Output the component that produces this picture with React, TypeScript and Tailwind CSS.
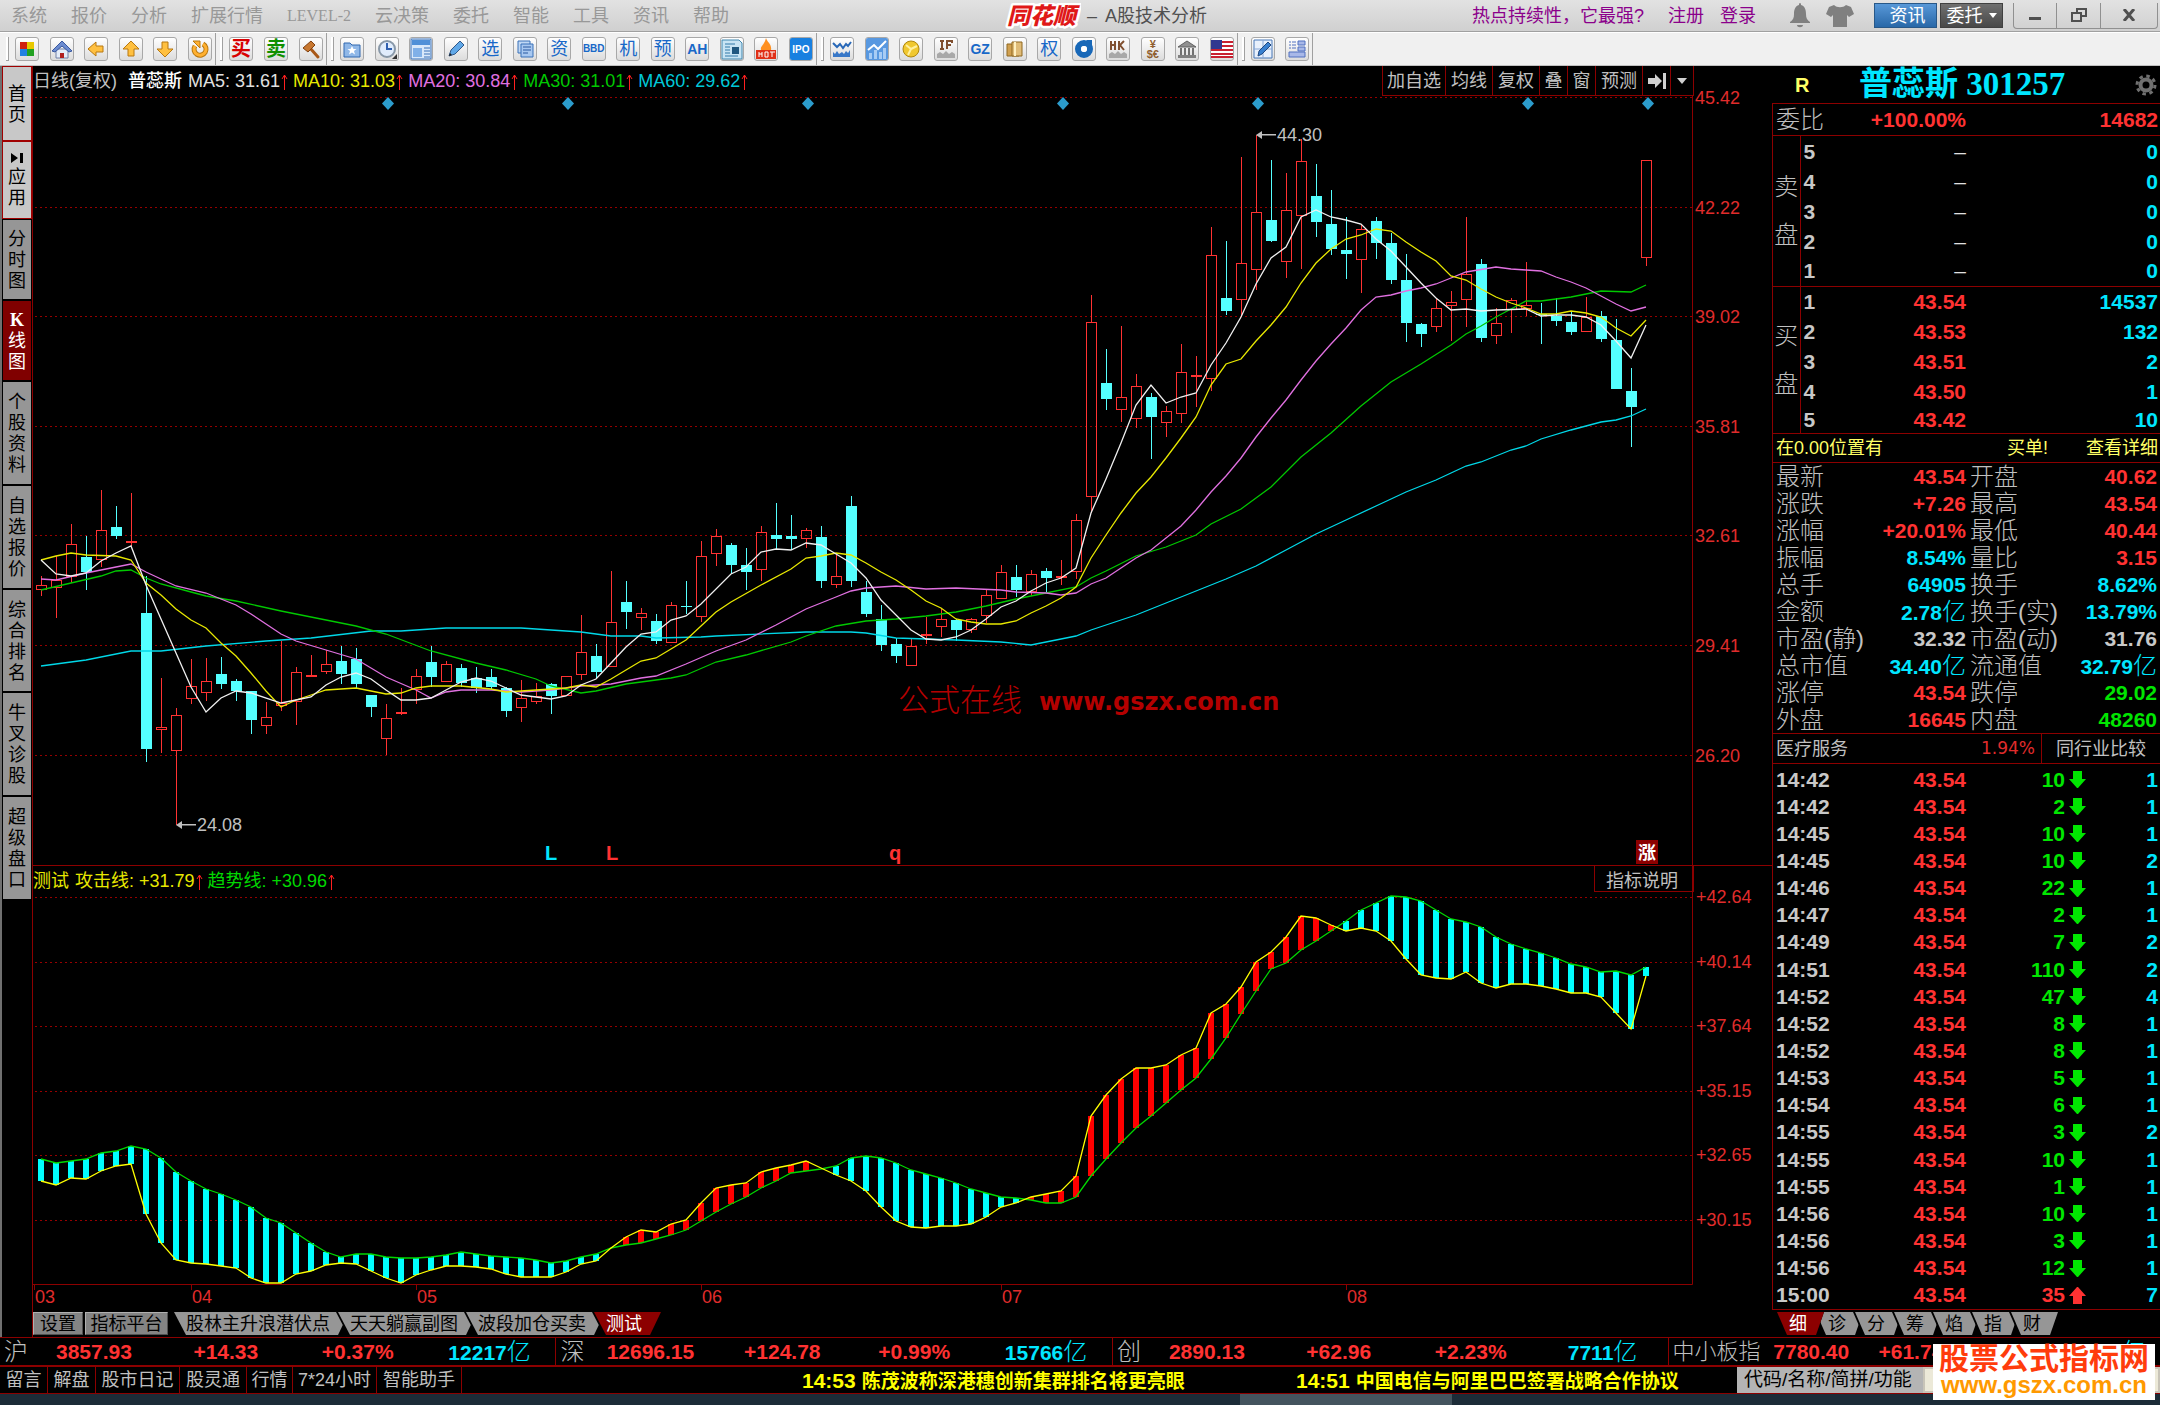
import type { ReactNode } from "react";
import clsx from "clsx";

const menus = ["系统", "报价", "分析", "扩展行情", "LEVEL-2", "云决策", "委托", "智能", "工具", "资讯", "帮助"];

const sideTabs = [
  { text: "首页", style: "h-[75px] bg-[#c8c8c8] border-[#a00000] text-black" },
  { text: "应用", style: "h-[78px] bg-[#c8c8c8] border-[#a00000] text-black" },
  { text: "分时图", style: "h-[81px] bg-[#969696] border-black text-black" },
  { text: "K线图", style: "h-[81px] bg-[#800000] border-black text-white" },
  { text: "个股资料", style: "h-[104px] bg-[#969696] border-black text-black" },
  { text: "自选报价", style: "h-[104px] bg-[#969696] border-black text-black" },
  { text: "综合排名", style: "h-[103px] bg-[#969696] border-black text-black" },
  { text: "牛叉诊股", style: "h-[104px] bg-[#969696] border-black text-black" },
  { text: "超级盘口", style: "h-[104px] bg-[#969696] border-black text-black" },
];

const maLabels = [
  { text: "MA5: 31.61", color: "text-[#e0e0e0]" },
  { text: "MA10: 31.03", color: "text-[#e8e800]" },
  { text: "MA20: 30.84", color: "text-[#e070e0]" },
  { text: "MA30: 31.01", color: "text-[#00c800]" },
  { text: "MA60: 29.62", color: "text-[#00c8d8]" },
];

// r = rising, f = falling; then high, body top, body bottom, low
type Candle = [string, number, number, number, number];
const candles: Candle[] = [
  ["r", 576, 585, 590, 596], ["r", 556, 580, 588, 618], ["r", 524, 544, 577, 583], ["f", 536, 557, 572, 590],
  ["r", 490, 530, 560, 567], ["f", 506, 527, 536, 539], ["r", 493, 541, 541, 546], ["f", 576, 613, 749, 762],
  ["r", 678, 727, 730, 753], ["r", 708, 715, 751, 825], ["r", 659, 686, 699, 704], ["r", 658, 681, 693, 701],
  ["f", 657, 674, 684, 689], ["f", 679, 681, 691, 701], ["f", 691, 691, 720, 734], ["r", 702, 717, 726, 734],
  ["r", 641, 703, 706, 711], ["r", 667, 672, 702, 725], ["r", 655, 675, 675, 677], ["r", 650, 664, 672, 674],
  ["f", 646, 661, 674, 684], ["f", 648, 659, 684, 688], ["f", 695, 695, 707, 717], ["r", 704, 718, 739, 755],
  ["r", 688, 712, 712, 715], ["r", 669, 676, 690, 704], ["f", 646, 662, 677, 687], ["r", 661, 664, 682, 682],
  ["f", 664, 668, 683, 687], ["f", 667, 678, 688, 693], ["f", 669, 677, 687, 689], ["f", 687, 688, 711, 717],
  ["r", 680, 698, 708, 722], ["r", 683, 696, 702, 704], ["f", 683, 684, 696, 714], ["r", 676, 676, 696, 696],
  ["r", 615, 652, 675, 680], ["f", 644, 656, 672, 679], ["r", 571, 622, 667, 667], ["f", 581, 602, 612, 629],
  ["r", 608, 613, 618, 630], ["f", 614, 621, 641, 644], ["r", 602, 605, 643, 643], ["f", 581, 606, 606, 614],
  ["r", 541, 556, 617, 622], ["r", 529, 536, 554, 566], ["f", 543, 545, 565, 574], ["f", 548, 565, 572, 590],
  ["r", 526, 532, 570, 581], ["f", 503, 535, 539, 550], ["f", 515, 536, 539, 550], ["r", 528, 530, 539, 548],
  ["f", 526, 537, 581, 588], ["r", 555, 576, 585, 588], ["f", 496, 506, 581, 587], ["f", 581, 592, 614, 617],
  ["f", 605, 619, 645, 651], ["f", 638, 644, 656, 663], ["r", 639, 646, 666, 666], ["r", 617, 634, 636, 644],
  ["r", 609, 619, 627, 637], ["f", 619, 620, 630, 641], ["r", 618, 619, 630, 633], ["r", 590, 595, 616, 623],
  ["r", 565, 572, 599, 599], ["f", 565, 577, 590, 597], ["r", 570, 574, 592, 596], ["f", 568, 571, 578, 592],
  ["r", 560, 576, 577, 585], ["r", 514, 520, 572, 579], ["r", 295, 322, 497, 513], ["f", 349, 383, 399, 410],
  ["r", 326, 397, 410, 422], ["r", 374, 386, 419, 428], ["f", 393, 397, 417, 459], ["r", 406, 411, 423, 437],
  ["r", 344, 372, 414, 423], ["r", 356, 375, 376, 407], ["r", 227, 255, 379, 391], ["f", 241, 298, 311, 315],
  ["r", 157, 263, 300, 315], ["r", 135, 212, 270, 290], ["f", 160, 220, 241, 242], ["r", 173, 210, 262, 278],
  ["r", 139, 161, 216, 269], ["f", 164, 196, 222, 237], ["f", 190, 224, 249, 255], ["f", 217, 250, 254, 279],
  ["r", 224, 229, 260, 293], ["f", 217, 221, 243, 259], ["f", 233, 243, 280, 284], ["f", 254, 280, 323, 342],
  ["f", 323, 324, 334, 347], ["r", 299, 308, 327, 332], ["r", 291, 302, 306, 341], ["r", 217, 274, 300, 327],
  ["f", 259, 264, 338, 342], ["r", 308, 323, 336, 344], ["r", 298, 300, 310, 333], ["r", 262, 305, 309, 316],
  ["f", 303, 314, 315, 344], ["f", 298, 316, 321, 326], ["f", 312, 322, 332, 335], ["r", 297, 317, 332, 332],
  ["f", 311, 316, 339, 342], ["f", 319, 340, 389, 389], ["f", 368, 391, 407, 447], ["r", 160, 160, 258, 266],
];

// [bar index, y] pairs
const ma5 = [[0, 560], [1, 574], [2, 576], [3, 573], [4, 561], [5, 553], [6, 546], [7, 585], [9, 653], [10, 687], [11, 712], [12, 698], [13, 691], [14, 693], [16, 703], [17, 700], [18, 697], [19, 685], [20, 677], [21, 673], [22, 679], [23, 690], [24, 700], [25, 700], [26, 698], [27, 690], [28, 682], [29, 678], [30, 681], [31, 688], [32, 695], [33, 697], [34, 699], [35, 696], [36, 685], [37, 679], [38, 663], [39, 647], [40, 634], [41, 632], [42, 620], [43, 616], [44, 604], [46, 574], [47, 567], [48, 552], [49, 549], [50, 550], [51, 543], [52, 545], [53, 554], [54, 563], [55, 578], [56, 600], [58, 630], [59, 639], [60, 640], [61, 637], [62, 630], [63, 619], [64, 607], [65, 601], [66, 591], [67, 583], [68, 578], [69, 568], [70, 513], [71, 479], [72, 443], [73, 405], [74, 385], [75, 403], [76, 397], [77, 393], [78, 365], [79, 343], [80, 317], [81, 284], [82, 258], [83, 247], [84, 217], [85, 210], [86, 217], [87, 220], [88, 224], [89, 239], [90, 251], [91, 267], [92, 283], [93, 298], [94, 310], [95, 309], [96, 311], [97, 310], [99, 309], [100, 316], [101, 315], [102, 315], [103, 317], [104, 325], [105, 341], [106, 358], [107, 325]];
const ma10 = [[0, 560], [1, 556], [2, 553], [3, 555], [5, 556], [6, 560], [7, 583], [8, 595], [9, 609], [10, 620], [11, 628], [12, 643], [13, 656], [14, 673], [15, 691], [16, 707], [17, 700], [18, 695], [19, 690], [21, 688], [22, 691], [23, 694], [24, 693], [25, 688], [26, 686], [28, 686], [30, 689], [31, 692], [32, 691], [34, 689], [35, 688], [36, 685], [37, 687], [38, 679], [39, 670], [40, 661], [41, 658], [42, 649], [43, 640], [44, 626], [45, 612], [46, 602], [48, 585], [50, 569], [51, 558], [52, 556], [53, 553], [54, 555], [55, 563], [56, 572], [57, 580], [58, 590], [59, 601], [60, 608], [61, 619], [62, 622], [63, 624], [64, 624], [65, 621], [66, 613], [67, 606], [68, 598], [69, 587], [70, 558], [71, 535], [72, 513], [73, 493], [74, 477], [75, 458], [76, 438], [77, 417], [78, 385], [79, 364], [80, 359], [81, 341], [82, 325], [83, 307], [84, 283], [85, 263], [86, 249], [87, 239], [88, 235], [89, 229], [90, 231], [91, 242], [92, 252], [93, 261], [94, 276], [95, 280], [96, 289], [97, 297], [98, 303], [99, 308], [100, 314], [101, 314], [102, 311], [103, 313], [104, 317], [105, 328], [106, 336], [107, 320]];
const ma20 = [[0, 579], [1, 580], [3, 573], [5, 567], [6, 564], [7, 572], [8, 579], [9, 586], [11, 593], [13, 605], [14, 614], [16, 634], [17, 641], [19, 650], [21, 659], [23, 677], [25, 690], [26, 698], [27, 692], [28, 690], [30, 690], [32, 692], [34, 690], [36, 686], [38, 684], [40, 678], [41, 676], [43, 664], [45, 651], [47, 640], [49, 625], [51, 609], [53, 597], [54, 591], [55, 588], [57, 586], [59, 589], [61, 588], [64, 590], [65, 592], [67, 593], [68, 595], [69, 593], [70, 584], [71, 578], [72, 568], [73, 558], [74, 550], [75, 538], [76, 526], [77, 510], [78, 492], [79, 476], [80, 458], [81, 437], [82, 418], [83, 400], [84, 380], [85, 361], [86, 344], [87, 328], [88, 310], [89, 297], [90, 295], [91, 291], [92, 288], [93, 284], [94, 278], [95, 272], [97, 267], [98, 269], [99, 270], [100, 271], [101, 277], [102, 282], [103, 288], [105, 304], [106, 311], [107, 307]];
const ma30 = [[0, 590], [2, 583], [4, 576], [5, 571], [6, 570], [7, 578], [8, 584], [10, 592], [11, 596], [13, 601], [16, 611], [19, 620], [21, 626], [23, 634], [26, 651], [29, 663], [31, 670], [33, 679], [34, 686], [36, 693], [37, 691], [39, 684], [42, 678], [43, 675], [45, 662], [47, 655], [50, 642], [51, 636], [53, 626], [55, 621], [57, 619], [59, 616], [61, 612], [63, 606], [65, 599], [67, 593], [69, 587], [70, 578], [71, 571], [73, 556], [75, 547], [77, 535], [78, 524], [80, 509], [82, 487], [84, 457], [86, 433], [88, 406], [90, 382], [92, 364], [94, 345], [95, 334], [96, 326], [97, 317], [98, 309], [99, 301], [100, 301], [102, 297], [104, 291], [106, 292], [107, 285]];
const ma60 = [[0, 666], [3, 660], [6, 651], [8, 651], [11, 646], [15, 641], [18, 638], [22, 631], [24, 631], [27, 628], [32, 628], [36, 632], [38, 636], [40, 636], [41, 638], [44, 637], [45, 636], [51, 632], [54, 632], [55, 633], [57, 638], [61, 640], [64, 642], [66, 645], [69, 636], [70, 630], [73, 615], [75, 603], [77, 591], [79, 579], [81, 566], [83, 550], [85, 534], [87, 520], [89, 506], [91, 492], [93, 480], [94, 473], [95, 466], [96, 462], [98, 450], [99, 446], [100, 439], [102, 430], [104, 422], [105, 420], [106, 416], [107, 409]];

const priceAxis = ["45.42", "42.22", "39.02", "35.81", "32.61", "29.41", "26.20"];
const subAxis = ["+42.64", "+40.14", "+37.64", "+35.15", "+32.65", "+30.15"];
const months = [[34, "03"], [191, "04"], [416, "05"], [701, "06"], [1001, "07"], [1346, "08"]] as [number, string][];

const trend = [1159, 1163, 1161, 1159, 1153, 1151, 1146, 1149, 1158, 1172, 1181, 1189, 1194, 1200, 1207, 1218, 1223, 1233, 1243, 1252, 1257, 1254, 1254, 1257, 1258, 1258, 1257, 1255, 1252, 1254, 1256, 1257, 1258, 1260, 1263, 1261, 1257, 1254, 1248, 1245, 1243, 1239, 1235, 1230, 1221, 1212, 1204, 1197, 1188, 1181, 1173, 1171, 1169, 1166, 1158, 1156, 1158, 1163, 1170, 1174, 1178, 1183, 1189, 1193, 1197, 1198, 1200, 1203, 1203, 1197, 1176, 1159, 1143, 1128, 1116, 1103, 1090, 1078, 1059, 1038, 1014, 991, 969, 963, 950, 941, 931, 921, 910, 903, 896, 897, 901, 910, 919, 922, 927, 937, 944, 949, 953, 958, 964, 967, 972, 971, 975, 967];
const attack = [1181, 1185, 1178, 1179, 1171, 1166, 1164, 1214, 1243, 1260, 1263, 1264, 1266, 1268, 1278, 1283, 1283, 1274, 1271, 1265, 1263, 1264, 1271, 1278, 1283, 1275, 1270, 1266, 1266, 1267, 1269, 1274, 1277, 1277, 1277, 1272, 1264, 1261, 1248, 1237, 1230, 1232, 1224, 1220, 1203, 1188, 1185, 1183, 1172, 1168, 1165, 1161, 1168, 1175, 1181, 1191, 1207, 1221, 1227, 1228, 1226, 1226, 1224, 1217, 1207, 1203, 1197, 1194, 1191, 1176, 1116, 1095, 1079, 1068, 1068, 1065, 1055, 1048, 1013, 1004, 987, 962, 952, 937, 916, 918, 925, 931, 928, 931, 941, 959, 975, 978, 979, 972, 983, 988, 984, 984, 986, 989, 993, 993, 997, 1013, 1029, 976];

const barX = (i: number) => 41 + i * 15;
const toPoints = (line: number[][]) => line.map(([i, y]) => `${barX(i)},${y}`).join(" ");

const sellRows = ["5", "4", "3", "2", "1"];
const buyRows = [["1", "43.54", "14537"], ["2", "43.53", "132"], ["3", "43.51", "2"], ["4", "43.50", "1"], ["5", "43.42", "10"]];

const R = "text-[#ff3232]";
const C = "text-[#00e6ff]";
const G = "text-[#00e600]";
const W = "text-[#c8c8c8]";

const stats = [
  ["最新", "43.54", R, "开盘", "40.62", R],
  ["涨跌", "+7.26", R, "最高", "43.54", R],
  ["涨幅", "+20.01%", R, "最低", "40.44", R],
  ["振幅", "8.54%", C, "量比", "3.15", R],
  ["总手", "64905", C, "换手", "8.62%", C],
  ["金额", "2.78亿", C, "换手(实)", "13.79%", C],
  ["市盈(静)", "32.32", W, "市盈(动)", "31.76", W],
  ["总市值", "34.40亿", C, "流通值", "32.79亿", C],
  ["涨停", "43.54", R, "跌停", "29.02", G],
  ["外盘", "16645", R, "内盘", "48260", G],
];

const ticks = [
  ["14:42", 10, 1], ["14:42", 2, 1], ["14:45", 10, 1], ["14:45", 10, 2], ["14:46", 22, 1],
  ["14:47", 2, 1], ["14:49", 7, 2], ["14:51", 110, 2], ["14:52", 47, 4], ["14:52", 8, 1],
  ["14:52", 8, 1], ["14:53", 5, 1], ["14:54", 6, 1], ["14:55", 3, 2], ["14:55", 10, 1],
  ["14:55", 1, 1], ["14:56", 10, 1], ["14:56", 3, 1], ["14:56", 12, 1], ["15:00", 35, 7],
];

const indexes = [
  ["沪", "3857.93", "+14.33", "+0.37%", "12217"],
  ["深", "12696.15", "+124.78", "+0.99%", "15766"],
  ["创", "2890.13", "+62.96", "+2.23%", "7711"],
];

function Num({ value }: { value: string }) {
  const unit = value.endsWith("亿");
  return (
    <>
      {unit ? value.slice(0, -1) : value}
      {unit && <span className="text-2xl leading-none font-light">亿</span>}
    </>
  );
}

function ToolButton({ label, children }: { label: string; children: ReactNode }) {
  return (
    <button
      type="button"
      aria-label={label}
      className="flex size-6 shrink-0 items-center justify-center overflow-hidden rounded-[3px] border border-[#a8a8a8] bg-linear-to-b from-white to-[#dcdcdc]"
    >
      {children}
    </button>
  );
}

function Glyph({ children }: { children: ReactNode }) {
  return (
    <svg viewBox="0 0 22 22" className="size-[22px] shrink-0" fill="none">
      {children}
    </svg>
  );
}

function ToolGroup({ width, children }: { width: string; children: ReactNode }) {
  return (
    <div className="flex h-full items-center border-r border-[#a0a0a0] pr-[3px]">
      <div className="mr-1.5 ml-1 h-6 w-[3px] border-r border-b border-[#a0a0a0] bg-white" />
      <div className={clsx("flex items-center justify-between", width)}>{children}</div>
    </div>
  );
}

const arrowPath = "M3 11 L11 4 V8 H18 V14 H11 V18 Z";

function Toolbar() {
  return (
    <div className="flex h-[34px] shrink-0 items-stretch border-t border-white border-b border-b-[#c0c0c0] bg-[#f0f0f0] pl-0.5">
      <ToolGroup width="w-[197px]">
        <ToolButton label="主页面">
          <Glyph>
            <path d="M4 4h7v7H4z" fill="#d02010" />
            <path d="M11 4h7v7h-7z" fill="#e8c800" />
            <path d="M4 11h7v7H4z" fill="#2080e0" />
            <path d="M11 11h7v7h-7z" fill="#20a020" />
          </Glyph>
        </ToolButton>
        <ToolButton label="首页">
          <Glyph>
            <path d="M5 11h12v9H5z" fill="#e4ecf8" stroke="#7080a8" />
            <path d="M9 15h4v5H9z" fill="#b02020" />
            <path d="M1 13 L11 3 L21 13 L18 14 L11 8 L4 14 Z" fill="#6c8cd0" stroke="#3858a0" />
          </Glyph>
        </ToolButton>
        <ToolButton label="后退">
          <Glyph><path d={arrowPath} fill="#ffc040" stroke="#b87810" /></Glyph>
        </ToolButton>
        <ToolButton label="上移">
          <Glyph><path d="M11 3 L19 11 H14 V18 H8 V11 H3 Z" fill="#ffc040" stroke="#b87810" /></Glyph>
        </ToolButton>
        <ToolButton label="下移">
          <Glyph><path d="M11 19 L19 11 H14 V4 H8 V11 H3 Z" fill="#ffc040" stroke="#b87810" /></Glyph>
        </ToolButton>
        <ToolButton label="刷新">
          <Glyph>
            <path d="M14 6a6 6 0 1 1-8 2" stroke="#b87810" strokeWidth="5" />
            <path d="M14 6a6 6 0 1 1-8 2" stroke="#ffb030" strokeWidth="3" />
            <path d="M4 3h7v7z" fill="#ffb030" stroke="#b87810" />
          </Glyph>
        </ToolButton>
      </ToolGroup>
      <ToolGroup width="w-[94px]">
        <ToolButton label="买入"><span className="text-xl leading-none font-bold text-[#d80000]">买</span></ToolButton>
        <ToolButton label="卖出"><span className="text-xl leading-none font-bold text-[#109000]">卖</span></ToolButton>
        <ToolButton label="拍卖">
          <Glyph>
            <path d="M10 10 L18 19" stroke="#a85818" strokeWidth="3" strokeLinecap="round" />
            <path d="M3 10 L11 3 L15 7 L8 14 Z" fill="#c87830" stroke="#804010" />
          </Glyph>
        </ToolButton>
      </ToolGroup>
      <ToolGroup width="w-[473px]">
        <ToolButton label="收藏">
          <Glyph>
            <path d="M3 5h6l2 2h8v12H3z" fill="#90b8e8" stroke="#3068b0" />
            <path d="M11 8l1.500 3h3l-2.500 2 1 3.500-3-2-3 2 1-3.500-2.500-2h3z" fill="#fff" />
          </Glyph>
        </ToolButton>
        <ToolButton label="时钟">
          <Glyph>
            <circle cx="11" cy="11" r="8" fill="#e0ecfc" stroke="#8898a8" strokeWidth="2" />
            <path d="M11 5v6h5" stroke="#3060b0" strokeWidth="2" />
            <path d="M21 16v5h-5z" fill="#333" />
          </Glyph>
        </ToolButton>
        <ToolButton label="版面">
          <Glyph>
            <path d="M1 1h20v20H1z" fill="#d8e8fa" stroke="#3870b8" />
            <path d="M2 2h18v5H2z" fill="#5090d8" />
            <path d="M3 10h9v9H3z" fill="#80b0e8" />
            <path d="M14 10h6M14 13h6M14 16h6M14 19h6" stroke="#3870b8" />
          </Glyph>
        </ToolButton>
        <ToolButton label="画线">
          <Glyph><path d="M4 18 L6 12 L15 3 L19 7 L10 16 Z" fill="#60a8e8" stroke="#305888" /><path d="M4 18l1-3 2 2z" fill="#222" /></Glyph>
        </ToolButton>
        <ToolButton label="选股"><span className="text-lg leading-none text-[#1868c8]">选</span></ToolButton>
        <ToolButton label="多窗口">
          <Glyph><path d="M4 3h12v12H4z" fill="#c0d8f4" stroke="#3870b8" /><path d="M7 6h12v13H7z" fill="#a8c8f0" stroke="#3870b8" /><path d="M9 9h8M9 12h8M9 15h5" stroke="#2858a0" /></Glyph>
        </ToolButton>
        <ToolButton label="资金"><span className="text-lg leading-none text-[#1868c8]">资</span></ToolButton>
        <ToolButton label="BBD"><span className="text-[10px] leading-none font-bold text-[#1868c8]">BBD</span></ToolButton>
        <ToolButton label="机构"><span className="text-lg leading-none text-[#1868c8]">机</span></ToolButton>
        <ToolButton label="预测"><span className="text-lg leading-none text-[#1868c8]">预</span></ToolButton>
        <ToolButton label="AH"><span className="text-sm leading-none font-bold text-[#1868c8]">AH</span></ToolButton>
        <ToolButton label="研报">
          <Glyph><path d="M1 2h17l3 3v16H1z" fill="#c8e4f4" stroke="#4088b0" /><path d="M4 6h10M4 9h5M4 12h5M4 15h5M4 18h13" stroke="#3078a8" /><path d="M11 9h7v7h-7z" fill="#205880" /></Glyph>
        </ToolButton>
        <ToolButton label="热点">
          <Glyph>
            <path d="M11 0c1 4 6 6 5 12H6c-1-4 3-4 5-12z" fill="#ff9020" />
            <path d="M1 12h20v9H1z" fill="#e03018" />
            <path d="M4 14v5M7 14v5M4 16h3M13 14v5h-3v-5zM15 14h5M17 14v5" stroke="#fff" />
          </Glyph>
        </ToolButton>
        <ToolButton label="新股">
          <span className="flex size-[22px] items-center justify-center bg-[#1880e0] text-[10px] font-bold text-white">IPO</span>
        </ToolButton>
      </ToolGroup>
      <ToolGroup width="w-[404px]">
        <ToolButton label="指数走势">
          <Glyph><path d="M2 5l4 4 3-3 3 4 3-4 2 2 3-4" stroke="#2868b8" strokeWidth="2" /><path d="M2 19v-5l2 2 2-3 2 3 3-2 2 2 2-3 2 2 2-3v7z" fill="#3878c8" /></Glyph>
        </ToolButton>
        <ToolButton label="趋势">
          <Glyph><path d="M0 0h22v22H0z" fill="#5898e0" /><path d="M3 21v-6h3v6zM8 21v-9h3v9zM13 21v-7h3v7zM17 21V10h3v11z" fill="#a8ccf4" /><path d="M2 12l6-5 4 4 8-8" stroke="#fff" strokeWidth="2" /></Glyph>
        </ToolButton>
        <ToolButton label="期货">
          <Glyph><circle cx="11" cy="11" r="8" fill="#f0c830" stroke="#b08810" /><path d="M6 7l5 4-3 6M11 11l6-3" stroke="#fff0a0" strokeWidth="2" /></Glyph>
        </ToolButton>
        <ToolButton label="股指期货">
          <Glyph><path d="M5 3h4M7 3v8M5 11h4M12 11V3h5v2M12 7h4" stroke="#805030" strokeWidth="2" /><path d="M2 20v-4l3-2 3 2 3-3 3 3 3-2 3 2v4z" fill="#a8a8a8" /></Glyph>
        </ToolButton>
        <ToolButton label="GZ"><span className="text-sm leading-none font-bold text-[#1868c8]">GZ</span></ToolButton>
        <ToolButton label="黄金">
          <Glyph><path d="M3 6h12v12H3z" fill="#d0a050" stroke="#906820" /><path d="M8 4h10v14H8z" fill="#e0bc78" stroke="#906820" /><path d="M11 4v14" stroke="#fff0c0" strokeWidth="2" /></Glyph>
        </ToolButton>
        <ToolButton label="权证"><span className="text-lg leading-none text-[#1868c8]">权</span></ToolButton>
        <ToolButton label="基金">
          <Glyph><circle cx="11" cy="11" r="6" stroke="#1868b8" strokeWidth="6" /><circle cx="11" cy="11" r="3" fill="#fff" /><path d="M13 2h6v6z" fill="#1868b8" /></Glyph>
        </ToolButton>
        <ToolButton label="港股">
          <Glyph><path d="M4 3v9M8 3v9M4 7h4M12 3v9M17 3l-4 4 4 5" stroke="#805030" strokeWidth="2" /><path d="M2 20v-4l3-2 3 2 3-3 3 3 3-2 3 2v4z" fill="#a8a8a8" /></Glyph>
        </ToolButton>
        <ToolButton label="外汇"><span className="text-center text-[11px] leading-[10px] font-bold text-[#906030]">¥<br />$€</span></ToolButton>
        <ToolButton label="银行">
          <Glyph><path d="M2 9l9-6 9 6z" fill="#909090" stroke="#606060" /><path d="M5 10v7M9 10v7M13 10v7M17 10v7" stroke="#707070" strokeWidth="2" /><path d="M2 17h18v3H2z" fill="#808080" /></Glyph>
        </ToolButton>
        <ToolButton label="美股">
          <Glyph><path d="M0 2h22v18H0z" fill="#fff" /><path d="M0 4h22M0 8h22M0 12h22M0 16h22M0 19h22" stroke="#c82030" strokeWidth="2" /><path d="M0 2h11v9H0z" fill="#303890" /></Glyph>
        </ToolButton>
      </ToolGroup>
      <ToolGroup width="w-[58px]">
        <ToolButton label="公式编辑">
          <Glyph><path d="M2 2h18v18H2z" fill="#e8f0fc" stroke="#4878b8" /><path d="M2 11h18M11 2v18" stroke="#88a8d8" /><path d="M6 18l1-5 9-9 3 3-9 9z" fill="#3880d0" stroke="#204880" /></Glyph>
        </ToolButton>
        <ToolButton label="页面设置">
          <Glyph><path d="M3 4h2M3 7h2M3 10h2M6 4h4M6 7h4M6 10h4" stroke="#5070c0" /><path d="M12 3h7v4h-7zM12 9h7v4h-7zM3 14h16v5H3z" fill="#a8b8e8" stroke="#5070c0" /></Glyph>
        </ToolButton>
      </ToolGroup>
    </div>
  );
}

function TitleBar() {
  return (
    <header className="relative flex h-8 shrink-0 items-center justify-between border-b border-[#a0a0a0] bg-linear-to-b from-[#e2e2e2] to-[#d0d0d0] text-lg leading-none">
      <nav className="flex items-center gap-6 pl-[11px] text-[#989898]">
        {menus.map((item) => (
          <button key={item} type="button" className={item === "LEVEL-2" ? "font-['Liberation_Serif',serif] text-base leading-none" : ""}>
            {item}
          </button>
        ))}
      </nav>
      <div className="absolute left-1/2 flex -translate-x-[75px] items-center text-[#505050]">
        <svg viewBox="0 0 76 26" className="h-[26px] w-[76px]">
          <text x="2" y="21" fontSize="23" fontWeight="900" fontStyle="italic" fill="#e01818" stroke="#fff" strokeWidth="5" strokeLinejoin="round" paintOrder="stroke">
            同花顺
          </text>
        </svg>
        <span className="pr-2 pl-1.5">–</span>
        <span>A股技术分析</span>
      </div>
      <div className="flex items-center">
        <a href="#hot" className="mr-6 text-[#8b008b]">热点持续性，它最强?</a>
        <a href="#register" className="mr-4 text-[#8b008b]">注册</a>
        <a href="#login" className="mr-[34px] text-[#8b008b]">登录</a>
        <button type="button" aria-label="消息" className="mr-4">
          <svg viewBox="0 0 20 25" className="h-[25px] w-5" fill="#808080">
            <path d="M10 0c1 0 1 1 1 2 4 1 5 5 5 9s1 6 4 8v1H0v-1c3-2 4-4 4-8s1-8 5-9c0-1 0-2 1-2zM7 22h6c0 3-6 3-6 0z" />
          </svg>
        </button>
        <button type="button" aria-label="皮肤" className="mr-5">
          <svg viewBox="0 0 28 22" className="h-[22px] w-7" fill="#808080">
            <path d="M8 0c3 3 9 3 12 0l5 2 3 7-5 3-2-2v12H7V10l-2 2-5-3 3-7z" />
          </svg>
        </button>
        <button type="button" className="mr-[3px] h-[25px] w-[63px] border border-[#285888] bg-linear-to-b from-[#5898d8] to-[#2868a8] pl-1 text-white">资讯</button>
        <button type="button" className="mr-2.5 flex h-[25px] w-[63px] items-center justify-center gap-1.5 border border-[#404040] bg-linear-to-b from-[#707070] to-[#484848] text-white">
          委托
          <svg viewBox="0 0 8 5" className="h-[5px] w-2" fill="#fff"><path d="M0 0h8L4 5z" /></svg>
        </button>
        <div className="mr-0.5 flex h-[26px] divide-x divide-[#909090] rounded-b border border-t-0 border-[#909090]">
          <button type="button" aria-label="最小化" className="flex w-[43px] items-center justify-center">
            <svg viewBox="0 0 14 14" className="size-3.5"><path d="M1 9h12v3H1z" fill="#505050" /></svg>
          </button>
          <button type="button" aria-label="还原" className="flex w-11 items-center justify-center">
            <svg viewBox="0 0 16 14" className="h-3.5 w-4" fill="none" stroke="#505050" strokeWidth="2"><path d="M6 4V1h9v7h-4M1 5h9v8H1z" /></svg>
          </button>
          <button type="button" aria-label="关闭" className="flex w-14 items-center justify-center">
            <svg viewBox="0 0 14 12" className="h-3 w-3.5" stroke="#505050" strokeWidth="3"><path d="M2 0l10 12M12 0L2 12" /></svg>
          </button>
        </div>
      </div>
    </header>
  );
}

function SideBar() {
  return (
    <nav className="w-8 shrink-0 border-l-2 border-[#707070] bg-black">
      {sideTabs.map((tab) => (
        <button
          key={tab.text}
          type="button"
          className={clsx("flex w-[30px] flex-col items-center justify-center border pt-0.5 text-lg leading-[21px]", tab.style)}
        >
          {tab.text === "应用" && (
            <svg viewBox="0 0 12 10" className="mb-1 h-2.5 w-3"><path d="M0 0l7 5-7 5zM9 0h3v10H9z" /></svg>
          )}
          {tab.text.split("").map((ch, i) => (
            <span key={i} className={ch === "K" ? "font-['Liberation_Serif',serif] font-bold" : ""}>{ch}</span>
          ))}
        </button>
      ))}
    </nav>
  );
}

function UpMark() {
  return (
    <svg viewBox="0 0 7 16" className="mx-px inline h-4 w-[7px] self-end" stroke="#ff2020" fill="none">
      <path d="M3.500 1v15M1 5l2.500-4L6 5" />
    </svg>
  );
}

function ChartHeader() {
  return (
    <div className="flex h-[30px] shrink-0 justify-between pr-[78px]">
      <div className="flex items-center text-lg leading-none whitespace-nowrap">
        <span className="w-[95px] text-[#c0c0c0]">日线(复权)</span>
        <span className="mr-1.5 font-medium text-white">普蕊斯</span>
        {maLabels.map((ma) => (
          <span key={ma.text} className={clsx("mr-1 flex items-center", ma.color)}>
            {ma.text}
            <UpMark />
          </span>
        ))}
      </div>
      <div className="flex divide-x divide-[#8c0000] border border-t-0 border-[#8c0000] text-lg leading-none text-[#c0c0c0]">
        <button type="button" className="w-[63px]">加自选</button>
        <button type="button" className="w-[47px]">均线</button>
        <button type="button" className="w-[47px]">复权</button>
        <button type="button" className="w-[28px]">叠</button>
        <button type="button" className="w-[28px]">窗</button>
        <button type="button" className="w-[47px]">预测</button>
        <button type="button" aria-label="跳到最新" className="flex w-7 items-center justify-center">
          <svg viewBox="0 0 18 16" className="h-4 w-[18px]" fill="#d0d0d0"><path d="M0 5h7V1l7 7-7 7v-4H0zM15 0h3v16h-3z" /></svg>
        </button>
        <button type="button" aria-label="更多" className="flex w-[22px] items-center justify-center">
          <svg viewBox="0 0 10 6" className="h-1.5 w-2.5" fill="#d0d0d0"><path d="M0 0h10L5 6z" /></svg>
        </button>
      </div>
    </div>
  );
}

function MainChart() {
  const sans = "'Liberation Sans', 'Noto Sans CJK SC', sans-serif";
  return (
    <svg viewBox="33 96 1739 769" preserveAspectRatio="none" className="min-h-0 w-full grow-[769] basis-0 overflow-visible" fontFamily={sans}>
      {priceAxis.map((label, i) => (
        <g key={label}>
          <line x1="35" x2="1693" y1={97.5 + Math.round(i * 109.6)} y2={97.5 + Math.round(i * 109.6)} stroke="#960000" strokeDasharray="2 3" shapeRendering="crispEdges" />
          <text x="1695" y={104 + Math.round(i * 109.6)} fontSize="18" fill="#e02c2c">{label}</text>
        </g>
      ))}
      <line x1="1692.5" x2="1692.5" y1="96" y2="865" stroke="#8c0000" />
      {[388, 568, 808, 1063, 1258, 1528, 1648].map((x) => (
        <path key={x} d={`M${x} 97l6 6.500-6 6.500-6-6.500z`} fill="#2c9ccc" />
      ))}
      <g shapeRendering="crispEdges">
        {candles.map(([kind, high, top, bottom, low], i) => {
          const x = barX(i);
          if (kind === "f") {
            return (
              <g key={i} fill="#54ffff">
                <rect x={x} y={high} width="1" height={low - high} />
                <rect x={x - 5} y={top} width="11" height={Math.max(bottom - top, 1)} />
              </g>
            );
          }
          return (
            <g key={i} stroke="#ff3232" fill="none">
              <path d={`M${x + 0.5} ${high}V${top}M${x + 0.5} ${bottom}V${low}`} />
              <rect x={x - 4.5} y={top + 0.5} width="10" height={Math.max(bottom - top - 1, 0.5)} />
            </g>
          );
        })}
      </g>
      <g fill="none" strokeWidth="1.3">
        <polyline points={toPoints(ma60)} stroke="#00d8e8" />
        <polyline points={toPoints(ma30)} stroke="#00c800" />
        <polyline points={toPoints(ma20)} stroke="#e070e0" />
        <polyline points={toPoints(ma10)} stroke="#e8e800" />
        <polyline points={toPoints(ma5)} stroke="#f0f0f0" />
      </g>
      <g fontSize="18" fill="#c0c0c0" stroke="none">
        <path d="M1256 135l6-4v3h14v1.500h-14v3.500z" />
        <text x="1277" y="141">44.30</text>
        <path d="M176 825l6-4v3h14v1.500h-14v3.500z" />
        <text x="197" y="831">24.08</text>
      </g>
      <text x="898" y="711" fontSize="31" fontWeight="300" fill="#b40000">公式在线</text>
      <text x="1039" y="710" fontSize="24" fontWeight="bold" fill="#b40000" fontFamily="'DejaVu Sans', sans-serif">www.gszx.com.cn</text>
      <g fontSize="20" fontWeight="bold">
        <text x="545" y="860" fill="#00e6ff">L</text>
        <text x="606" y="860" fill="#ff3232">L</text>
        <text x="889" y="860" fill="#ff3232">q</text>
      </g>
      <rect x="1636" y="840" width="22" height="24" fill="#8c0000" />
      <text x="1638" y="859" fontSize="18" fontWeight="bold" fill="#fff">涨</text>
    </svg>
  );
}

function SubChart() {
  const line = (ys: number[]) => ys.map((y, i) => `${barX(i)},${y}`).join(" ");
  return (
    <svg viewBox="33 892 1739 420" preserveAspectRatio="none" className="min-h-0 w-full grow-[420] basis-0 overflow-visible" fontFamily="'Liberation Sans', sans-serif">
      {subAxis.map((label, i) => (
        <g key={label}>
          <line x1="35" x2="1693" y1={897.5 + Math.round(i * 64.5)} y2={897.5 + Math.round(i * 64.5)} stroke="#960000" strokeDasharray="2 3" shapeRendering="crispEdges" />
          <text x="1696" y={903 + Math.round(i * 64.5)} fontSize="18" fill="#e02c2c">{label}</text>
        </g>
      ))}
      <g shapeRendering="crispEdges">
        {trend.map((t, i) => {
          const a = attack[i];
          if (Math.abs(t - a) < 2) return null;
          return <rect key={i} x={barX(i) - 3} y={Math.min(t, a)} width="6" height={Math.abs(t - a)} fill={t < a ? "#00ffff" : "#ff0000"} />;
        })}
      </g>
      <polyline points={line(trend)} fill="none" stroke="#00d800" strokeWidth="1.3" />
      <polyline points={line(attack)} fill="none" stroke="#ffff00" strokeWidth="1.3" />
      <path d="M33 1284.500H1692.500V866" fill="none" stroke="#8c0000" />
      {months.map(([x, label]) => (
        <g key={label}>
          <line x1={x + 0.5} x2={x + 0.5} y1="1284" y2="1290" stroke="#8c0000" />
          <text x={x + 1} y="1303" fontSize="18" fill="#e02c2c">{label}</text>
        </g>
      ))}
    </svg>
  );
}

function SlantTab({ text, active, small }: { text: string; active?: boolean; small?: boolean }) {
  return (
    <button
      type="button"
      className={clsx(
        "h-[23px] bg-black text-lg leading-none",
        small
          ? "[clip-path:polygon(0_0,100%_0,calc(100%-8px)_100%,10px_100%)] not-first:-ml-2.5"
          : "[clip-path:polygon(0_0,100%_0,calc(100%-11px)_100%,12px_100%)] not-first:-ml-[13px]",
        active && "relative z-10 text-white"
      )}
    >
      <span
        className={clsx(
          "flex h-full items-center",
          active ? "bg-[#8c0000]" : "bg-[#969696] text-black",
          small
            ? "pr-[17px] pl-3.5 [clip-path:polygon(2px_0,100%_0,100%_100%,12px_100%)]"
            : "pr-[19px] pl-3.5 [clip-path:polygon(2px_0,100%_0,100%_100%,14px_100%)]"
        )}
      >
        {text}
      </span>
    </button>
  );
}

function ChartArea() {
  return (
    <main className="flex min-w-0 flex-1 flex-col border-l border-[#8c0000]">
      <ChartHeader />
      <MainChart />
      <div className="flex h-[27px] shrink-0 justify-between border-t border-[#8c0000] text-lg leading-none">
        <div className="flex items-center pt-1">
          <span className="mr-1.5 text-[#e8e800]">测试</span>
          <span className="flex items-center text-[#e8e800]">攻击线: +31.79<UpMark /></span>
          <span className="ml-1 flex items-center text-[#00d800]">趋势线: +30.96<UpMark /></span>
        </div>
        <button type="button" className="mr-[78px] w-[100px] border border-t-0 border-[#8c0000] pt-1 pl-[11px] text-left text-[#c0c0c0]">指标说明</button>
      </div>
      <SubChart />
      <div className="flex h-[25px] shrink-0">
        <button type="button" className="mr-0.5 h-[23px] w-[50px] border border-[#b0b0b0] border-r-[#505050] border-b-[#505050] bg-[#848484] text-lg leading-none text-black">设置</button>
        <button type="button" className="mr-1 h-[23px] w-[83px] border border-[#b0b0b0] border-r-[#505050] border-b-[#505050] bg-[#848484] text-lg leading-none whitespace-nowrap text-black">指标平台</button>
        <div className="flex">
          <SlantTab text="股林主升浪潜伏点" />
          <SlantTab text="天天躺赢副图" />
          <SlantTab text="波段加仓买卖" />
          <SlantTab text="测试" active />
        </div>
      </div>
    </main>
  );
}

function OrderBook() {
  return (
    <table className="w-full border-collapse text-[21px] leading-none font-bold">
      <tbody>
        {sellRows.map((level, i) => (
          <tr key={level} className="h-[30px]">
            {i === 0 && <th rowSpan={5} className="w-[27px] border-r border-[#8c0000] text-2xl leading-[48px] font-light text-[#c0c0c0]">卖<br />盘</th>}
            <th className="w-6 pl-[3px] text-left text-[#c8c8c8]">{level}</th>
            <td className="w-[142px] text-right font-normal text-[#e0e0e0]">–</td>
            <td className="pr-0.5 text-right text-[#00e6ff]">0</td>
          </tr>
        ))}
        {buyRows.map(([level, price, volume], i) => (
          <tr key={level} className={clsx(i === 4 ? "h-[27px]" : "h-[30px]", i === 0 && "border-t border-[#8c0000]")}>
            {i === 0 && <th rowSpan={5} className="border-r border-[#8c0000] text-2xl leading-[48px] font-light text-[#c0c0c0]">买<br />盘</th>}
            <th className="pl-[3px] text-left text-[#c8c8c8]">{level}</th>
            <td className="text-right text-[#ff3232]">{price}</td>
            <td className="pr-0.5 text-right text-[#00e6ff]">{volume}</td>
          </tr>
        ))}
      </tbody>
    </table>
  );
}

function QuotePanel() {
  return (
    <aside className="flex w-[388px] shrink-0 flex-col">
      <div className="flex h-[37px] shrink-0 items-center pr-[3px] pl-[23px]">
        <span className="w-16 text-xl leading-none font-bold text-[#ffff66]">R</span>
        <h1 className="flex-1 font-['Liberation_Serif','Noto_Sans_CJK_SC',serif] text-[33px] leading-none font-bold text-[#00e6ff]">普蕊斯 301257</h1>
        <button type="button" aria-label="设置">
          <svg viewBox="0 0 22 22" className="size-[22px]" fill="none" stroke="#707070">
            <circle cx="11" cy="11" r="5.500" strokeWidth="4" />
            <circle cx="11" cy="11" r="9" strokeWidth="3" strokeDasharray="3.500 3.570" />
          </svg>
        </button>
      </div>
      <div className="flex min-h-0 flex-1 flex-col border border-r-0 border-[#8c0000]">
        <div className="flex h-8 shrink-0 items-center border-b border-[#8c0000] pr-0.5 pl-[3px] text-[21px] leading-none font-bold text-[#ff3232]">
          <span className="w-[60px] text-2xl leading-none font-light text-[#c0c0c0]">委比</span>
          <span className="w-[130px] text-right">+100.00%</span>
          <span className="flex-1 text-right">14682</span>
        </div>
        <OrderBook />
        <div className="flex h-[30px] shrink-0 items-center border-y border-[#8c0000] pr-0.5 pl-[3px] text-lg leading-none text-[#ffff66]">
          <span className="w-[231px]">在0.00位置有</span>
          <span className="flex-1">买单!</span>
          <a href="#detail">查看详细</a>
        </div>
        <table className="w-full shrink-0 border-collapse text-[21px] leading-none font-bold">
          <tbody>
            {stats.map(([a, av, ac, b, bv, bc]) => (
              <tr key={a} className="h-[27px]">
                <th className="w-[88px] pl-[3px] text-left text-2xl leading-none font-light whitespace-nowrap text-[#c0c0c0]">{a}</th>
                <td className={clsx("w-[102px] text-right", ac)}><Num value={av} /></td>
                <th className="w-[96px] pl-1 text-left text-2xl leading-none font-light whitespace-nowrap text-[#c0c0c0]">{b}</th>
                <td className={clsx("pr-[3px] text-right", bc)}><Num value={bv} /></td>
              </tr>
            ))}
          </tbody>
        </table>
        <div className="flex h-[31px] shrink-0 items-center border-y border-[#8c0000] text-lg leading-none text-[#c0c0c0]">
          <span className="flex-1 pl-[3px]">医疗服务</span>
          <span className="pr-1.5 font-['DejaVu_Sans',sans-serif] text-[17px] leading-none text-[#e02c2c]">1.94%</span>
          <button type="button" className="h-full w-[119px] border-l border-[#8c0000]">同行业比较</button>
        </div>
        <div className="min-h-0 flex-1 pt-0.5">
          <table className="h-full w-full border-collapse text-[21px] leading-6 font-bold">
            <tbody>
              {ticks.map(([time, volume, count], i) => {
                const up = time === "15:00";
                return (
                  <tr key={i}>
                    <td className="w-[93px] pl-[3px] text-[#c8c8c8]">{time}</td>
                    <td className="w-[100px] text-right text-[#ff3232]">43.54</td>
                    <td className={clsx("w-[99px] text-right", up ? "text-[#ff3232]" : "text-[#00e600]")}>{volume}</td>
                    <td className="w-6 pl-1">
                      <svg viewBox="0 0 17 17" className="size-[17px]" fill={up ? "#ff3232" : "#00e600"}>
                        <path d={up ? "M4 17h9V9h4L9 0H8L0 9h4z" : "M4 0h9v8h4l-8 9H8L0 8h4z"} />
                      </svg>
                    </td>
                    <td className="pr-0.5 text-right text-[#00e6ff]">{count}</td>
                  </tr>
                );
              })}
            </tbody>
          </table>
        </div>
      </div>
      <div className="flex h-[27px] shrink-0 pt-0.5 pl-[3px]">
        {["细", "诊", "分", "筹", "焰", "指", "财"].map((tab, i) => (
          <SlantTab key={tab} text={tab} active={i === 0} small />
        ))}
      </div>
    </aside>
  );
}

function IndexBar() {
  return (
    <div className="flex h-[30px] shrink-0 divide-x divide-[#8c0000] border-t border-b-2 border-[#8c0000] text-[21px] leading-none font-bold text-[#ff3232]">
      {indexes.map(([name, value, change, pct, amount]) => (
        <div key={name} className="flex flex-[556] items-center text-center">
          <span className="w-7 shrink-0 pl-1 text-2xl leading-none font-light text-[#c0c0c0]">{name}</span>
          <span className="flex-1">{value}</span>
          <span className="flex-1">{change}</span>
          <span className="flex-1">{pct}</span>
          <span className="flex-1 text-[#00e6ff]"><Num value={amount + "亿"} /></span>
        </div>
      ))}
      <div className="flex flex-[491] items-center text-center">
        <span className="w-[92px] shrink-0 pl-0.5 text-[22px] leading-none font-light whitespace-nowrap text-[#c0c0c0]">中小板指</span>
        <span className="flex-1">7780.40</span>
        <span className="flex-1">+61.74</span>
        <span className="flex-1">+0.80%</span>
        <span className="flex-1 text-[#00e6ff]"><Num value="1848亿" /></span>
      </div>
    </div>
  );
}

function StatusBar() {
  return (
    <div className="flex h-[27px] shrink-0 border-b border-[#8c0000] text-lg leading-none">
      <div className="flex divide-x divide-[#8c0000] border-r border-[#8c0000] text-[#c0c0c0]">
        <button type="button" className="w-12">留言</button>
        <button type="button" className="w-12">解盘</button>
        <button type="button" className="w-[84px]">股市日记</button>
        <button type="button" className="w-[67px]">股灵通</button>
        <button type="button" className="w-[46px]">行情</button>
        <button type="button" className="w-[84px]">7*24小时</button>
        <button type="button" className="w-[84px]">智能助手</button>
      </div>
      <div className="flex flex-1 items-center justify-end text-[19px] leading-none font-bold whitespace-nowrap text-[#ffff00]">
        <a href="#news-1" className="w-[494px]"><span className="mr-1.5 text-[21px]">14:53</span>陈茂波称深港穗创新集群排名将更亮眼</a>
        <a href="#news-2" className="w-[441px]"><span className="mr-1.5 text-[21px]">14:51</span>中国电信与阿里巴巴签署战略合作协议</a>
      </div>
      <input aria-label="代码搜索" placeholder="代码/名称/简拼/功能" className="w-[186px] bg-[#b4b4b4] pl-[7px] text-[19px] text-black placeholder:text-black" />
      <div className="w-[237px] border-2 border-[#c8c4b8] bg-[#ece9d8]" />
    </div>
  );
}

export default function App() {
  return (
    <div className="relative flex h-screen flex-col overflow-hidden bg-black font-['Liberation_Sans','Noto_Sans_CJK_SC',sans-serif]">
      <TitleBar />
      <Toolbar />
      <div className="flex min-h-0 flex-1">
        <SideBar />
        <ChartArea />
        <QuotePanel />
      </div>
      <IndexBar />
      <StatusBar />
      <div className="flex h-[11px] shrink-0 justify-center bg-[#1c2c38]">
        <div className="ml-[532px] w-[212px] bg-[#44545e]" />
      </div>
      <div className="absolute right-[5px] bottom-[5px] flex h-14 w-[222px] flex-col items-center bg-white font-bold">
        <span className="text-[30px] leading-[30px] text-[#ff3c0c]">股票公式指标网</span>
        <span className="text-2xl leading-[22px] text-[#ff9900]">www.gszx.com.cn</span>
      </div>
    </div>
  );
}
